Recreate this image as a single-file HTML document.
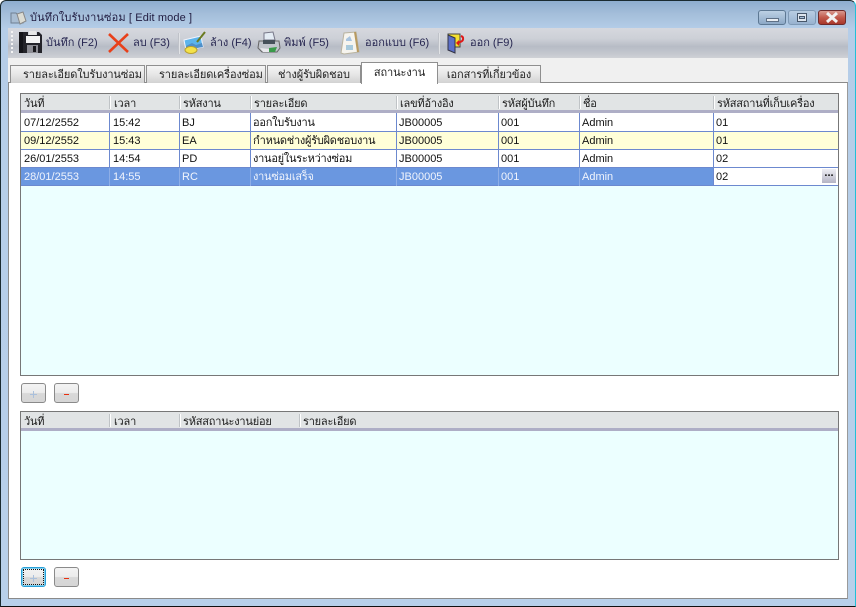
<!DOCTYPE html>
<html><head><meta charset="utf-8">
<style>
html,body{margin:0;padding:0;background:#fff}
body{width:856px;height:607px;overflow:hidden;position:relative;font-family:"Liberation Sans","DejaVu Sans",sans-serif;font-size:11px;color:#111}
div,span{position:absolute;box-sizing:border-box;white-space:nowrap}
#win{left:0;top:0;width:856px;height:607px;background:linear-gradient(180deg,#8eadcf 0,#a3bdd9 12px,#b5cde8 28px,#b8d0ea 100%);border:1px solid #1a2a30;border-radius:6px 6px 0 0;border-right-color:#20c0d8;border-bottom-color:#111}
#tb{left:8px;top:28px;width:840px;height:30px;background:linear-gradient(180deg,#d6d8de 0,#cdd0d7 35%,#b7bcc6 62%,#c4c7ce 85%,#cfd1d6 100%)}
#tabs{left:8px;top:58px;width:840px;height:25px;background:#f0f0f0}
#main{left:8px;top:82px;width:840px;height:517px;background:#fff;border:1px solid #8a8a8a;border-right-color:#9a9a9a}
.tab{top:65px;height:18px;border:1px solid #8f8f8f;border-bottom:0;background:linear-gradient(180deg,#f4f4f4 0,#e8e8e8 45%,#d2d2d2 100%);line-height:18px;font-size:11px;color:#222;letter-spacing:-.1px}
.tab.on{top:62px;height:22px;background:#fff;border-bottom:0;line-height:20px;z-index:3}
.tl{font-size:11px;top:35px;color:#262650;line-height:16px}
.sep{top:33px;width:2px;height:21px;background:linear-gradient(90deg,#aeb2ba,#f2f3f5)}
.grid{left:20px;width:819px;background:#ecffff;border:1px solid #777}
.hd{left:0;top:0;width:817px;height:19px;background:#e1e4e5;border-bottom:3px solid #aeaec6}
.h{top:1px;line-height:18px;font-size:11px;color:#1a1a1a;letter-spacing:-.2px}
.hs{top:2px;width:1px;height:13px;background:#fff;box-shadow:-1px 0 0 #bfc3c6}
.row{left:1px;width:817px;height:18px;background:#fff;border-bottom:1px solid #6c89cf}
.row.y{background:#ffffd8}
.row.s{background:#6a97e0;color:#f0f4fc}
.c{top:1px;line-height:17px;font-size:11px}
.t{letter-spacing:-.25px}
.v{top:0;width:1px;height:18px;background:#6c89cf}
.btn{width:25px;height:20px;border:1px solid #8a8a8a;border-radius:3px;background:linear-gradient(180deg,#f3f3f3 0,#ececec 48%,#d8d8d8 52%,#d6d6d6 100%)}
svg{position:absolute;overflow:visible}
</style></head><body>
<div id="win"></div>
<svg style="left:10px;top:9px" width="17" height="17" viewBox="0 0 17 17"><path d="M1 4h5l1 1h6v9H1z" fill="#a9bdd2" stroke="#6f8093"/><path d="M7 5l6-2 3 9-6 3z" fill="#dcdcd4" stroke="#888"/></svg>
<div style="left:30px;top:11px;font-size:11px;line-height:15px;color:#201c40;letter-spacing:.12px">บันทึกใบรับงานซ่อม [ Edit mode ]</div>

<div style="left:758px;top:10px;width:28px;height:15px;border:1px solid #5d7893;border-radius:3px;background:linear-gradient(180deg,#bcd0e4,#a5bdd6 50%,#8ca8c6)"></div>
<div style="left:766px;top:18px;width:13px;height:4px;background:#e8edf2;border:1px solid #5e7086"></div>
<div style="left:788px;top:10px;width:28px;height:15px;border:1px solid #7f9ab6;border-radius:3px;background:linear-gradient(180deg,#b8cde2,#a8c0da 50%,#98b2cf)"></div>
<div style="left:797px;top:13px;width:10px;height:9px;border:1px solid #46566a;background:#dde5ee"></div>
<div style="left:799px;top:16px;width:6px;height:3px;border:1px solid #46566a;background:#a8c0da"></div>
<div style="left:818px;top:10px;width:28px;height:15px;border:1px solid #6e2a2a;border-radius:3px;background:linear-gradient(180deg,#d99a90,#c25a4c 50%,#a8382c)"></div>
<svg style="left:825px;top:12px" width="14" height="11"><path d="M2 1l10 9M12 1L2 10" stroke="#f2f2f2" stroke-width="3"/></svg>

<div id="tb"></div>
<div style="left:11px;top:31px;width:2px;height:24px;background:repeating-linear-gradient(180deg,#f4f4f4 0,#f4f4f4 2px,transparent 2px,transparent 4px)"></div>
<svg style="left:19px;top:31px" width="24" height="23" viewBox="0 0 24 23"><path d="M0 1h4v21H0z" fill="#15151a"/><path d="M4 1h5v3h9V1h2l3 3v18H4z" fill="#24242a"/><rect x="7" y="5" width="14" height="7" fill="#f4f4f4"/><rect x="8" y="14" width="11" height="8" fill="#8d8d94"/><rect x="14" y="15" width="3" height="6" fill="#18181c"/><rect x="10" y="0" width="7" height="4" fill="#e8e8e8"/></svg>
<div class="tl" style="left:46px">บันทึก (F2)</div>
<svg style="left:107px;top:33px" width="23" height="20" viewBox="0 0 23 20"><path d="M2 1l19 18M21 1L2 19" stroke="#e8401a" stroke-width="2.6"/></svg>
<div class="tl" style="left:133px">ลบ (F3)</div>
<div class="sep" style="left:178px"></div>
<svg style="left:183px;top:31px" width="23" height="24" viewBox="0 0 23 24"><path d="M1 9l17-4 2 11-17 3z" fill="#5cb4ec" stroke="#f0f4ff"/><path d="M3 15l6-3 4 2 6-2 1 4-17 3z" fill="#4f8fc8"/><ellipse cx="8" cy="19" rx="6" ry="3.5" fill="#f4e24a" stroke="#b8a030"/><path d="M14 11L22 1" stroke="#6a7a20" stroke-width="2"/></svg>
<div class="tl" style="left:210px">ล้าง (F4)</div>
<svg style="left:257px;top:31px" width="24" height="24" viewBox="0 0 24 24"><path d="M7 2l9-1 2 8H7z" fill="#e4ecf4" stroke="#778"/><path d="M2 10h20l1 7-3 4H5l-4-4z" fill="#c0c4cb" stroke="#666"/><rect x="6" y="9" width="12" height="4" fill="#46505a"/><path d="M12 17l8-1-2 5h-6z" fill="#3a9a4a"/><path d="M3 17l9 1v3H6z" fill="#e8e8ec"/></svg>
<div class="tl" style="left:284px">พิมพ์ (F5)</div>
<svg style="left:340px;top:31px" width="20" height="24" viewBox="0 0 20 24"><path d="M4 2l12-1 3 20-15 2-3-1z" fill="#f6f4ee" stroke="#b9b39f"/><path d="M15 1l3 20" stroke="#b89a60" stroke-width="2"/><path d="M6 8l4-3 2 5H6z" fill="#a8c4e0"/><rect x="6" y="14" width="7" height="5" fill="#a8cadc"/></svg>
<div class="tl" style="left:365px">ออกแบบ (F6)</div>
<div class="sep" style="left:438px"></div>
<svg style="left:447px;top:33px" width="19" height="20" viewBox="0 0 19 20"><path d="M1 1h12v13H1z" fill="#f4e030" stroke="#444"/><path d="M1 2l7 3v15l-7-3z" fill="#5c70c8" stroke="#334"/><path d="M14 3c3 1 3 5-1 6l-3 1" fill="none" stroke="#e01818" stroke-width="2"/><path d="M9 10l3-3v6z" fill="#e01818"/></svg>
<div class="tl" style="left:470px">ออก (F9)</div>

<div id="tabs"></div>
<div id="main"></div>
<div class="tab" style="left:10px;width:135px;padding-left:12px">รายละเอียดใบรับงานซ่อม</div>
<div class="tab" style="left:146px;width:120px;padding-left:12px">รายละเอียดเครื่องซ่อม</div>
<div class="tab" style="left:267px;width:94px;text-align:center">ช่างผู้รับผิดชอบ</div>
<div class="tab on" style="left:361px;width:77px;text-align:center">สถานะงาน</div>
<div class="tab" style="left:437px;width:104px;text-align:center">เอกสารที่เกี่ยวข้อง</div>

<div class="grid" style="top:93px;height:283px">
 <div class="hd"></div>
 <div class="h" style="left:3px">วันที่</div><div class="hs" style="left:89px"></div>
 <div class="h" style="left:93px">เวลา</div><div class="hs" style="left:159px"></div>
 <div class="h" style="left:162px">รหัสงาน</div><div class="hs" style="left:230px"></div>
 <div class="h" style="left:233px">รายละเอียด</div><div class="hs" style="left:376px"></div>
 <div class="h" style="left:379px">เลขที่อ้างอิง</div><div class="hs" style="left:478px"></div>
 <div class="h" style="left:481px">รหัสผู้บันทึก</div><div class="hs" style="left:559px"></div>
 <div class="h" style="left:562px">ชื่อ</div><div class="hs" style="left:693px"></div>
 <div class="h" style="left:696px">รหัสสถานที่เก็บเครื่อง</div>

 <div class="row" style="top:19px;left:0;height:19px;padding:0">
  <div class="c" style="left:3px;top:2px">07/12/2552</div><div class="v" style="left:88px"></div>
  <div class="c" style="left:92px;top:2px">15:42</div><div class="v" style="left:158px"></div>
  <div class="c" style="left:161px;top:2px">BJ</div><div class="v" style="left:229px"></div>
  <div class="c t" style="left:232px;top:2px">ออกใบรับงาน</div><div class="v" style="left:375px"></div>
  <div class="c" style="left:378px;top:2px">JB00005</div><div class="v" style="left:477px"></div>
  <div class="c" style="left:480px;top:2px">001</div><div class="v" style="left:558px"></div>
  <div class="c" style="left:561px;top:2px">Admin</div><div class="v" style="left:692px"></div>
  <div class="c" style="left:695px;top:2px">01</div>
 </div>
 <div class="row y" style="top:38px;left:0">
  <div class="c" style="left:3px">09/12/2552</div><div class="v" style="left:88px"></div>
  <div class="c" style="left:92px">15:43</div><div class="v" style="left:158px"></div>
  <div class="c" style="left:161px">EA</div><div class="v" style="left:229px"></div>
  <div class="c t" style="left:232px">กำหนดช่างผู้รับผิดชอบงาน</div><div class="v" style="left:375px"></div>
  <div class="c" style="left:378px">JB00005</div><div class="v" style="left:477px"></div>
  <div class="c" style="left:480px">001</div><div class="v" style="left:558px"></div>
  <div class="c" style="left:561px">Admin</div><div class="v" style="left:692px"></div>
  <div class="c" style="left:695px">01</div>
 </div>
 <div class="row" style="top:56px;left:0">
  <div class="c" style="left:3px">26/01/2553</div><div class="v" style="left:88px"></div>
  <div class="c" style="left:92px">14:54</div><div class="v" style="left:158px"></div>
  <div class="c" style="left:161px">PD</div><div class="v" style="left:229px"></div>
  <div class="c t" style="left:232px">งานอยู่ในระหว่างซ่อม</div><div class="v" style="left:375px"></div>
  <div class="c" style="left:378px">JB00005</div><div class="v" style="left:477px"></div>
  <div class="c" style="left:480px">001</div><div class="v" style="left:558px"></div>
  <div class="c" style="left:561px">Admin</div><div class="v" style="left:692px"></div>
  <div class="c" style="left:695px">02</div>
 </div>
 <div class="row s" style="top:74px;left:0">
  <div class="c" style="left:3px">28/01/2553</div><div class="v" style="left:88px;background:#8eaee6"></div>
  <div class="c" style="left:92px">14:55</div><div class="v" style="left:158px;background:#8eaee6"></div>
  <div class="c" style="left:161px">RC</div><div class="v" style="left:229px;background:#8eaee6"></div>
  <div class="c t" style="left:232px">งานซ่อมเสร็จ</div><div class="v" style="left:375px;background:#8eaee6"></div>
  <div class="c" style="left:378px">JB00005</div><div class="v" style="left:477px;background:#8eaee6"></div>
  <div class="c" style="left:480px">001</div><div class="v" style="left:558px;background:#8eaee6"></div>
  <div class="c" style="left:561px">Admin</div>
  <div style="left:692px;top:0;width:125px;height:17px;background:#fff;color:#111;border-left:1px solid #6c89cf"><div class="c" style="left:2px">02</div>
   <div style="left:108px;top:1px;width:14px;height:14px;background:linear-gradient(180deg,#eeeef4,#b4b4c4);color:#111;font-weight:bold;font-size:11px;line-height:8px;text-align:center">...</div></div>
 </div>
</div>

<div class="btn" style="left:21px;top:383px"></div>
<div style="left:30px;top:394px;width:7px;height:1px;background:#aac0dc"></div><div style="left:33px;top:391px;width:1px;height:7px;background:#aac0dc"></div>
<div class="btn" style="left:54px;top:383px"></div>
<div style="left:64px;top:394px;width:5px;height:1px;background:#e83010"></div>

<div class="grid" style="top:411px;height:149px">
 <div class="hd"></div>
 <div class="h" style="left:3px">วันที่</div><div class="hs" style="left:89px"></div>
 <div class="h" style="left:93px">เวลา</div><div class="hs" style="left:159px"></div>
 <div class="h" style="left:162px">รหัสสถานะงานย่อย</div><div class="hs" style="left:279px"></div>
 <div class="h" style="left:282px">รายละเอียด</div>
</div>

<div class="btn" style="left:21px;top:567px;border:1px solid #2aa0d8;box-shadow:inset 0 0 0 1px #7fd0f0"></div>
<div style="left:23px;top:569px;width:21px;height:16px;border:1px dotted #111"></div>
<div style="left:30px;top:578px;width:7px;height:1px;background:#aac0dc"></div><div style="left:33px;top:575px;width:1px;height:7px;background:#aac0dc"></div>
<div class="btn" style="left:54px;top:567px"></div>
<div style="left:64px;top:578px;width:5px;height:1px;background:#e83010"></div>
</body></html>
